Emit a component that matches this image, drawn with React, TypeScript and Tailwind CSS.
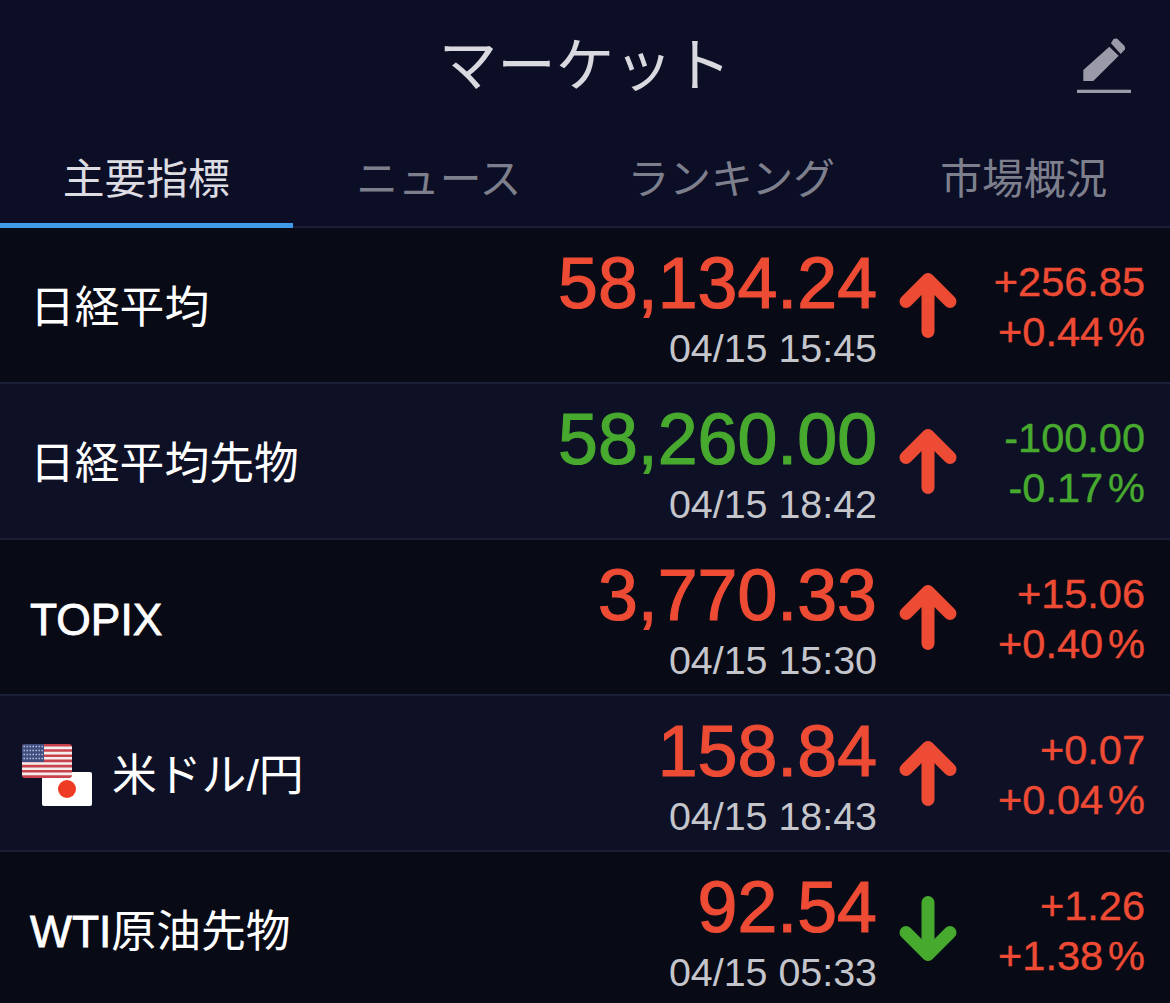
const latin = "font-['Liberation_Sans','Noto_Sans_CJK_JP',sans-serif]"

const red = "text-[#ee4b35]"
const green = "text-[#47a92e]"

type Row = {
  name: string
  latinPart?: string
  price: string
  time: string
  change: string
  pct: string
  priceUp: boolean
  changeUp: boolean
  arrowUp: boolean
  flag?: boolean
}

const rows: Row[] = [
  { name: "日経平均", price: "58,134.24", time: "04/15 15:45", change: "+256.85", pct: "+0.44", priceUp: true, changeUp: true, arrowUp: true },
  { name: "日経平均先物", price: "58,260.00", time: "04/15 18:42", change: "-100.00", pct: "-0.17", priceUp: false, changeUp: false, arrowUp: true },
  { name: "", latinPart: "TOPIX", price: "3,770.33", time: "04/15 15:30", change: "+15.06", pct: "+0.40", priceUp: true, changeUp: true, arrowUp: true },
  { name: "米ドル/円", price: "158.84", time: "04/15 18:43", change: "+0.07", pct: "+0.04", priceUp: true, changeUp: true, arrowUp: true, flag: true },
  { name: "原油先物", latinPart: "WTI", price: "92.54", time: "04/15 05:33", change: "+1.26", pct: "+1.38", priceUp: true, changeUp: true, arrowUp: false },
]

const tabs = ["主要指標", "ニュース", "ランキング", "市場概況"]

const Arrow = ({ up }: { up: boolean }) => (
  <svg width="58" height="66" viewBox="0 0 58 66" className={up ? "text-[#ee4b35]" : "text-[#47a92e]"}>
    <g fill="none" stroke="currentColor" strokeWidth="13" strokeLinecap="round" strokeLinejoin="round">
      {up ? (
        <>
          <path d="M29 59.5V8" />
          <path d="M7 29.5L29 7.5L51 29.5" />
        </>
      ) : (
        <>
          <path d="M29 6.5V58" />
          <path d="M7 36.5L29 58.5L51 36.5" />
        </>
      )}
    </g>
  </svg>
)

const Flags = () => (
  <div className="relative w-[70px] h-[62px] shrink-0 -mt-[2px]">
    <div className="absolute left-[20px] top-[28px] w-[50px] h-[34px] rounded-[2px] bg-white flex items-center justify-center">
      <span className="w-[18px] h-[18px] rounded-full bg-[#ee3b24]" />
    </div>
    <svg width="50" height="34" viewBox="0 0 50 34" className="absolute left-0 top-0 rounded-[3px]">
      <rect width="50" height="34" fill="#c8414b" />
      <path d="M0 3.9h50M0 9.1h50M0 14.3h50M0 19.5h50M0 24.7h50M0 29.9h50" stroke="#f4eeee" strokeWidth="2.6" />
      <rect width="22" height="18" fill="#3f4d80" />
      <path d="M1.5 2.5h20M1.5 6.5h20M1.5 10.5h20M1.5 14.5h20" stroke="#c3c8dc" strokeWidth="1.4" strokeDasharray="1.4 1.6" />
    </svg>
  </div>
)

export default function App() {
  return (
    <div className={`w-[1170px] h-[1003px] overflow-hidden bg-[#0c0e26] ${latin}`}>
      <header className="relative h-[133px] flex items-center justify-center">
        <h1 className="text-[#d9d9df] text-[58.5px] leading-none font-normal">マーケット</h1>
        <svg width="54" height="58" viewBox="0 0 54 58" className="absolute left-[1077px] top-[37px] text-[#9a9aa8]">
          <path fill="currentColor" d="M6.3 33L32.3 9.7L41.7 18.7L16.3 44H6.3Z" />
          <path fill="currentColor" d="M34 6.3L36.3 2.3Q38 1 40.3 1.7L47.3 8.7Q48.5 10.5 48 12.3L43.7 17Z" />
          <rect y="52.7" width="54" height="3.3" fill="currentColor" />
        </svg>
      </header>

      <nav className="h-[95px] grid grid-cols-4 border-b-2 border-[#1c1f3a]">
        {tabs.map((t, i) => (
          <div
            key={t}
            className={`flex items-center justify-center pt-[5px] text-[41.8px] border-b-[5px] -mb-[2px] ${
              i === 0 ? "text-[#dcdce2] border-[#3f9be6]" : "text-[#7e7f8c] border-transparent"
            }`}
          >
            {t}
          </div>
        ))}
      </nav>

      {rows.map((r, i) => (
        <div
          key={r.latinPart ?? r.name}
          className={`h-[156px] flex items-center border-b-2 border-[#1c1f3a] ${i % 2 === 0 ? "bg-[#080a16]" : "bg-[#0e1126]"}`}
        >
          <div className={`flex-1 flex items-center pt-[6px] text-white text-[44.8px] ${r.flag ? "pl-[22px]" : "pl-[30px]"}`}>
            {r.flag && <Flags />}
            <span className={r.flag ? "ml-[20px]" : ""}>
              {r.latinPart && <span className="text-[44.4px] [-webkit-text-stroke:0.8px_white]">{r.latinPart}</span>}
              {r.name}
            </span>
          </div>
          <div className="flex flex-col items-end pt-[3px]">
            <div className={`text-[71.7px] leading-[80px] [-webkit-text-stroke:1.2px_currentColor] ${r.priceUp ? red : green}`}>{r.price}</div>
            <div className="mt-[3px] text-[#c5c6cc] text-[39.4px] leading-[44px]">{r.time}</div>
          </div>
          <div className="ml-[22px] w-[58px]">
            <Arrow up={r.arrowUp} />
          </div>
          <div className={`flex flex-col items-end w-[213px] pr-[25px] pt-[4px] text-[41.5px] leading-[50px] [-webkit-text-stroke:0.4px_currentColor] ${r.changeUp ? red : green}`}>
            <div>{r.change}</div>
            <div>
              {r.pct}
              <span className="ml-[5px]">%</span>
            </div>
          </div>
        </div>
      ))}
    </div>
  )
}
